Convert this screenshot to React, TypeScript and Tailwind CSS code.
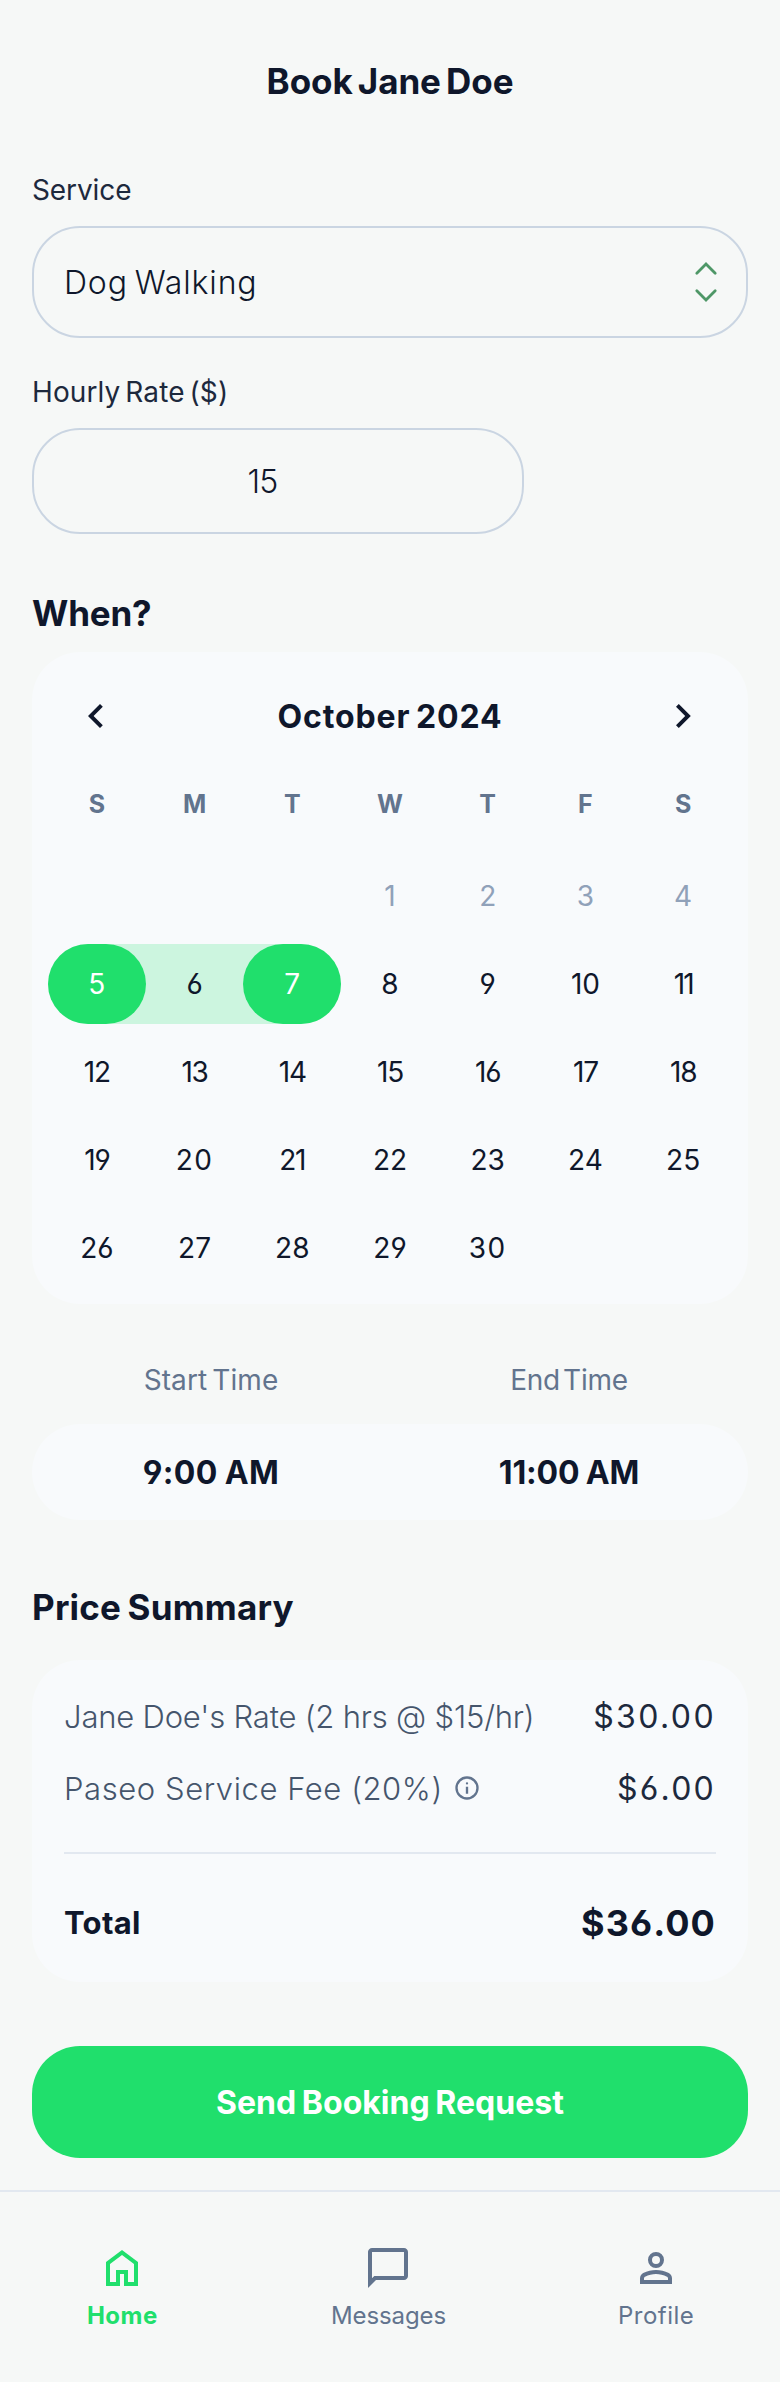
import React from "react";

const WEEKDAYS = ["S", "M", "T", "W", "T", "F", "S"];
const DAYS = Array.from({ length: 30 }, (_, i) => i + 1);

function Icon({ d, className }: { d: string; className: string }) {
  return (
    <svg viewBox="0 0 24 24" fill="currentColor" className={className}>
      <path d={d} fillRule="evenodd" />
    </svg>
  );
}

const CHEVRON_LEFT = "M14 18l-6-6 6-6 1.4 1.4-4.6 4.6 4.6 4.6z";
const CHEVRON_RIGHT = "M12.6 12L8 7.4 9.4 6l6 6-6 6L8 16.6z";
const HOME = "M6 19h3v-6h6v6h3v-9l-6-4.5L6 10v9zm-2 2V9l8-6 8 6v12h-7v-6h-2v6H4z";
const CHAT =
  "M2 22V4q0-.825.588-1.412T4 2h16q.825 0 1.413.588T22 4v12q0 .825-.587 1.413T20 18H6l-4 4zm3.15-6H20V4H4v13.125L5.15 16z";
const PERSON =
  "M12 12a4 4 0 1 1 0-8 4 4 0 0 1 0 8zm0-2a2 2 0 1 0 0-4 2 2 0 0 0 0 4zM4 20v-2.8q0-.85.438-1.563T5.6 14.55q1.55-.775 3.15-1.162T12 13t3.25.388t3.15 1.162q.725.375 1.163 1.088T20 17.2V20zm2-2h12v-.8q0-.275-.138-.5t-.362-.35q-1.35-.675-2.725-1.012T12 15t-2.775.338T6.5 16.35q-.225.125-.363.35T6 17.2z";
const INFO =
  "M11 17h2v-6h-2zm1-8a1 1 0 1 0 0-2 1 1 0 0 0 0 2zM12 22a10 10 0 1 1 0-20 10 10 0 0 1 0 20zm0-2a8 8 0 1 0 0-16 8 8 0 0 0 0 16z";

function Day({ day }: { day: number }) {
  const selected = day === 5 || day === 7;
  const tracking =
    day === 11
      ? "tracking-[-2px]"
      : (day > 11 && day < 20) || day === 21
        ? "tracking-[-1.2px]"
        : day === 20 || day === 30
          ? "tracking-[1.5px]"
          : "";
  const range =
    day === 5
      ? "rounded-l-[40px] bg-[#20df6c]/20"
      : day === 6
        ? "bg-[#20df6c]/20"
        : day === 7
          ? "rounded-r-[40px] bg-[#20df6c]/20"
          : "";
  const color = selected
    ? "rounded-[40px] bg-[#20df6c] text-white"
    : day < 5
      ? "text-slate-400"
      : "text-slate-900";
  return (
    <div className={`h-20 ${day === 1 ? "col-start-4" : ""} ${range}`}>
      <div className={`flex h-full w-full items-center justify-center pb-px text-[28px] ${tracking} ${color}`}>
        {day}
      </div>
    </div>
  );
}

export default function App() {
  return (
    <div className="flex h-[2382px] w-[780px] flex-col bg-[#f6f8f7] font-['Inter',sans-serif] text-slate-900 [font-feature-settings:'cv03','cv04']">
      <header className="flex h-[162px] items-center justify-center">
        <h1 className="text-[35px] leading-10 font-bold tracking-[-0.09px] [word-spacing:-3px]">Book Jane Doe</h1>
      </header>

      <main className="flex flex-col px-8">
        <label className="mt-2 text-[28px] leading-10 tracking-[-0.1px] text-slate-800">Service</label>
        <div className="mt-4 flex h-28 items-center justify-between rounded-[48px] border-2 border-slate-300 pr-7 pl-[30px]">
          <span className="pt-px text-[32px] leading-10 font-[350] tracking-[0.85px] [word-spacing:-3px]">
            Dog Walking
          </span>
          <svg
            viewBox="0 0 24 44"
            className="h-11 w-6 text-[#4e9767]"
            fill="none"
            stroke="currentColor"
            strokeWidth="2.8"
            strokeLinecap="round"
          >
            <path d="M2.8 13.2L12 4l9.2 9.2M2.8 30.8L12 40l9.2-9.2" />
          </svg>
        </div>

        <label className="mt-[34px] text-[28px] leading-10 tracking-[0.1px] text-slate-800 [word-spacing:-3px]">
          Hourly Rate ($)
        </label>
        <div className="mt-4 flex h-[106px] w-[492px] items-center justify-center rounded-[48px] border-2 border-slate-300">
          <span className="mr-[31px] pt-0.5 text-[32px] leading-10 font-[350] tracking-[-0.8px]">15</span>
        </div>

        <h2 className="mt-[59px] text-[35px] leading-10 font-bold tracking-[-0.19px]">When?</h2>
        <section className="mt-[19px] rounded-[48px] bg-slate-50 p-4">
          <div className="flex h-24 items-center justify-between px-6">
            <Icon d={CHEVRON_LEFT} className="size-12" />
            <span className="pt-px text-[32px] leading-10 font-bold tracking-[0.9px] [word-spacing:-3px]">
              October 2024
            </span>
            <Icon d={CHEVRON_RIGHT} className="size-12" />
          </div>
          <div className="grid h-[84px] grid-cols-7 pb-0.5">
            {WEEKDAYS.map((d, i) => (
              <div key={i} className="flex items-center justify-center text-[25px] font-bold text-slate-500">
                {d}
              </div>
            ))}
          </div>
          <div className="mt-2 grid grid-cols-7 gap-y-2">
            {DAYS.map((d) => (
              <Day key={d} day={d} />
            ))}
          </div>
        </section>

        <div className="mt-14 grid grid-cols-2 text-center text-[28px] leading-10 text-slate-500">
          <span className="tracking-[0.1px] [word-spacing:-3px]">Start Time</span>
          <span className="tracking-[-0.25px] [word-spacing:-4.5px]">End Time</span>
        </div>
        <div className="mt-6 grid h-24 grid-cols-2 items-center rounded-[48px] bg-slate-50 pt-px text-center text-[32px] font-bold [word-spacing:-1px]">
          <span className="tracking-[0.4px]">9:00 AM</span>
          <span className="tracking-[-0.15px]">11:00 AM</span>
        </div>

        <h2 className="mt-[67px] text-[35px] leading-10 font-bold tracking-[0.2px] [word-spacing:-2px]">
          Price Summary
        </h2>
        <section className="mt-[33px] flex flex-col rounded-[48px] bg-slate-50 p-8 text-[31px]">
          <div className="flex h-12 items-center justify-between pt-0.5">
            <span className="font-[350] tracking-[-0.19px] text-slate-600">Jane Doe's Rate (2 hrs @ $15/hr)</span>
            <span className="text-[32px] tracking-[2.4px] text-slate-800">$30.00</span>
          </div>
          <div className="mt-6 flex h-12 items-center justify-between">
            <div className="flex items-center text-slate-600">
              <span className="pt-0.5 font-[350] tracking-[0.57px]">Paseo Service Fee (20%)</span>
              <Icon d={INFO} className="ml-[10px] size-7 text-slate-500" />
            </div>
            <span className="pt-0.5 text-[32px] tracking-[2.2px] text-slate-800">$6.00</span>
          </div>
          <div className="mt-10 h-0.5 bg-slate-200" />
          <div className="mt-10 flex h-14 items-center justify-between pt-0.5 font-bold">
            <span className="tracking-[0.3px]">Total</span>
            <span className="text-[36px] tracking-[1.1px]">$36.00</span>
          </div>
        </section>

        <button className="mt-16 h-28 rounded-[48px] bg-[#20df6c] pt-px text-[32px] font-bold tracking-[0.02px] text-white [word-spacing:-2px]">
          Send Booking Request
        </button>
      </main>

      <nav className="mt-8 flex h-48 justify-around border-t-2 border-slate-200 pt-[52px] text-[24px] leading-8 text-slate-500">
        <div className="flex w-[71px] flex-col items-center gap-2 text-[#20df6c]">
          <Icon d={HOME} className="size-12" />
          <span className="font-bold tracking-[0.48px]">Home</span>
        </div>
        <div className="flex w-[114px] flex-col items-center gap-2">
          <Icon d={CHAT} className="size-12" />
          <span className="tracking-[-0.1px]">Messages</span>
        </div>
        <div className="flex w-[74px] flex-col items-center gap-2">
          <Icon d={PERSON} className="size-12" />
          <span className="tracking-[0.52px]">Profile</span>
        </div>
      </nav>
    </div>
  );
}
